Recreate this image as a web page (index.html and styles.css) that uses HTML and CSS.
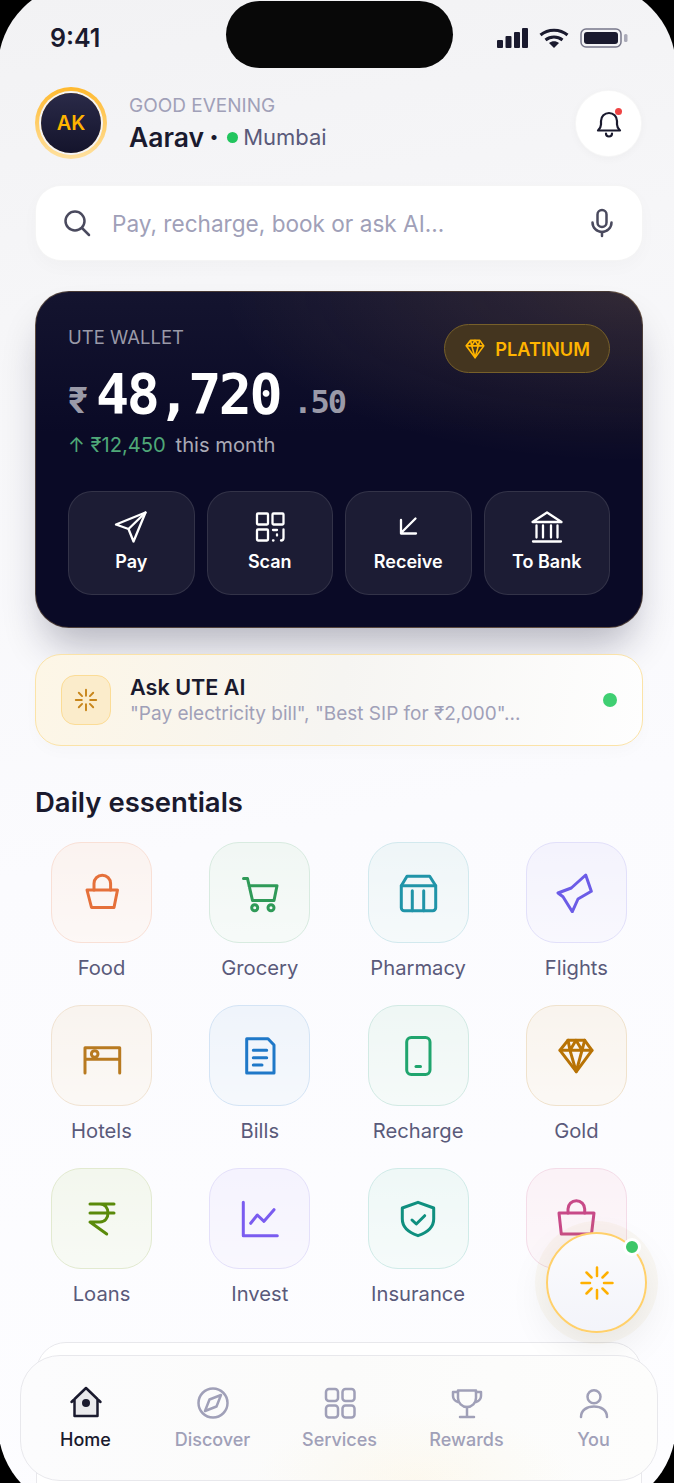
FILE: index.html
```html
<!DOCTYPE html>
<html lang="en">
<head>
    <meta charset="UTF-8">
    <meta name="viewport" content="width=device-width, initial-scale=1.0">
    <title>UTE Home</title>
    <link rel="stylesheet" href="styles.css">
</head>
<body>
    <div class="phone">
        <div class="island"></div>

        <div class="status-bar">
            <span class="time">9:41</span>
            <div class="status-icons">
                <svg width="31" height="20" viewBox="0 0 31 20"><rect x="0" y="12" width="6" height="8" rx="1"/><rect x="8.500" y="8" width="6" height="12" rx="1"/><rect x="17" y="4" width="6" height="16" rx="1"/><rect x="25" y="0" width="6" height="20" rx="1"/></svg>
                <svg width="30" height="20" viewBox="0 0 30 20" fill="none" stroke="#1a1a2e" stroke-width="3"><path d="M1.500 7c7.500-6.500 19.500-6.500 27 0"/><path d="M6.500 12c5-4 12-4 17 0"/><path d="M15 20l-5-5c3-2.500 7-2.500 10 0z" fill="#1a1a2e" stroke="none"/></svg>
                <svg width="48" height="20" viewBox="0 0 48 20"><rect x="1" y="1" width="40" height="18" rx="5" fill="none" stroke="#77778a" stroke-width="1.500"/><rect x="4" y="4" width="34" height="12" rx="3" fill="#1a1a2e"/><rect x="44" y="6" width="3.500" height="8" rx="1.500" fill="#aaaab8"/></svg>
            </div>
        </div>

        <header class="top-row">
            <div class="avatar"><span>AK</span></div>
            <div class="hello">
                <div class="greeting">GOOD EVENING</div>
                <div class="who"><strong>Aarav</strong> <b class="sep">·</b> <i class="live-dot"></i> Mumbai</div>
            </div>
            <button class="bell">
                <svg width="30" height="30" viewBox="0 0 30 30" fill="none" stroke="#1a1a2e" stroke-width="2.200" stroke-linejoin="round" stroke-linecap="round"><path d="M4 22.500h22c-2-2-3-3.500-3-6v-3.500a8 8 0 0 0-16 0v3.500c0 2.500-1 4-3 6z"/><path d="M12 25.500a3 3 0 0 0 6 0"/></svg>
                <i class="bell-dot"></i>
            </button>
        </header>

        <div class="search">
            <svg width="30" height="30" viewBox="0 0 30 30" fill="none" stroke="#4a4a5e" stroke-width="2.500" stroke-linecap="round"><circle cx="12" cy="13" r="9.500"/><path d="M19 20l7 7"/></svg>
            <span class="search-text">Pay, recharge, book or ask AI...</span>
            <svg width="26" height="30" viewBox="0 0 26 30" fill="none" stroke="#4a4a5e" stroke-width="2.500" stroke-linecap="round"><rect x="8.500" y="2" width="9" height="17" rx="4.500"/><path d="M3.500 14.500a9.500 9.500 0 0 0 19 0"/><path d="M13 24v4"/></svg>
        </div>

        <section class="wallet">
            <div class="wallet-top">
                <div>
                    <div class="wallet-label">UTE WALLET</div>
                    <div class="balance"><span class="rupee">₹</span><span class="amount">48,720</span><span class="paise">.50</span></div>
                    <div class="delta"><span class="delta-up">↑ ₹12,450</span> this month</div>
                </div>
                <div class="tier">
                    <svg width="22" height="22" viewBox="0 0 40 40" fill="none" stroke="#ffb400" stroke-width="3" stroke-linejoin="round"><path d="M4 14.300L12 4.300H28.700L36 14.300L20.300 35.700Z"/><path d="M4 14.300H36M14 14.300L20.200 35.700L26 14.300M12 4.300L14 14.300L20 4.300L26 14.300L28.700 4.300"/></svg>
                    PLATINUM
                </div>
            </div>
            <div class="actions">
                <div class="action">
                    <svg width="36" height="36" viewBox="0 0 36 36" fill="none" stroke="#fff" stroke-width="2.300" stroke-linejoin="round" stroke-linecap="round"><path d="M32.500 3.500L3 15.500L15.500 20L20.500 32.500Z"/><path d="M15.500 20L32.500 3.500"/></svg>
                    <span>Pay</span>
                </div>
                <div class="action">
                    <svg width="36" height="36" viewBox="0 0 36 36" fill="none" stroke="#fff" stroke-width="2.300" stroke-linecap="round"><rect x="5" y="4.500" width="11" height="11" rx="1"/><rect x="20.500" y="4.500" width="11" height="11" rx="1"/><rect x="5" y="20.500" width="11" height="11" rx="1"/><path d="M21 21h4M31.500 20.500V29c0 1.500-1 2.500-2.500 2.500M25 25.500v1M21 31.500h.5"/></svg>
                    <span>Scan</span>
                </div>
                <div class="action">
                    <svg width="36" height="36" viewBox="0 0 36 36" fill="none" stroke="#fff" stroke-width="2.300" stroke-linecap="round" stroke-linejoin="round"><path d="M25.500 9.500L11 24M11 11v13.500h15"/></svg>
                    <span>Receive</span>
                </div>
                <div class="action">
                    <svg width="36" height="36" viewBox="0 0 36 36" fill="none" stroke="#fff" stroke-width="2.300" stroke-linecap="round" stroke-linejoin="round"><path d="M3.500 13L18 3.500L32.500 13Z"/><path d="M7.500 16.500v12M14 16.500v12M22 16.500v12M28.500 16.500v12M4 32.500h28"/></svg>
                    <span>To Bank</span>
                </div>
            </div>
        </section>

        <section class="ask">
            <div class="ask-icon">
                <svg width="24" height="24" viewBox="0 0 40 40" fill="none" stroke="#c8851a" stroke-width="3.200" stroke-linecap="round"><path d="M20 3v10M20 27v10M3 20h10M27 20h10M8 8l5.500 5.500M26.500 26.500L32 32M32 8l-5.500 5.500M13.500 26.500L8 32"/></svg>
            </div>
            <div class="ask-text">
                <div class="ask-title">Ask UTE AI</div>
                <div class="ask-hint">"Pay electricity bill", "Best SIP for ₹2,000"...</div>
            </div>
            <i class="ask-dot"></i>
        </section>

        <h2 class="section-title">Daily essentials</h2>

        <div class="grid">
            <div class="item">
                <div class="tile tile-food"><svg viewBox="0 0 40 40"><path d="M12 17v-6.500a8.300 8.300 0 0 1 16.600 0V17"/><path d="M5 17H35.500L32 34.500H9.500Z"/></svg></div>
                <span>Food</span>
            </div>
            <div class="item">
                <div class="tile tile-grocery"><svg viewBox="0 0 40 40"><path d="M3.500 5.500H7.500L12.500 27.500H34L37 12.700H9"/><circle cx="14.700" cy="34.700" r="3"/><circle cx="31" cy="34.700" r="3"/></svg></div>
                <span>Grocery</span>
            </div>
            <div class="item">
                <div class="tile tile-pharmacy"><svg viewBox="0 0 40 40"><path d="M3.300 12.700L9 3.300H31.700L37.700 12.700V34.700a3 3 0 0 1-3 3H6.300a3 3 0 0 1-3-3Z"/><path d="M3.300 12.700H37.700M14.300 17.700V37.700M25.700 17.700V37.700"/></svg></div>
                <span>Pharmacy</span>
            </div>
            <div class="item">
                <div class="tile tile-flights"><svg viewBox="0 0 40 40"><path d="M29.700 2L35.300 18.300L22 26L16.300 38.700L7 23.700L2 20L15.300 15Z"/></svg></div>
                <span>Flights</span>
            </div>
            <div class="item">
                <div class="tile tile-hotels"><svg viewBox="0 0 40 40"><path d="M3 37V11.700H37.700V37M3 23.300H37.700"/><circle cx="12.700" cy="18" r="3.300"/></svg></div>
                <span>Hotels</span>
            </div>
            <div class="item">
                <div class="tile tile-bills"><svg viewBox="0 0 40 40"><path d="M6.700 2.700H28L34 9V37H6.700Z"/><path d="M13.300 14.300H26.700M13.300 21.700H26.700M13.300 29H22"/></svg></div>
                <span>Bills</span>
            </div>
            <div class="item">
                <div class="tile tile-recharge"><svg viewBox="0 0 40 40"><rect x="8.700" y="1.500" width="23.300" height="37" rx="4.500"/><path d="M18 30.500H22.500"/></svg></div>
                <span>Recharge</span>
            </div>
            <div class="item">
                <div class="tile tile-gold"><svg viewBox="0 0 40 40"><path d="M4 14.300L12 4.300H28.700L36 14.300L20.300 35.700Z"/><path d="M4 14.300H36M14 14.300L20.200 35.700L26 14.300M12 4.300L14 14.300L20 4.300L26 14.300L28.700 4.300"/></svg></div>
                <span>Gold</span>
            </div>
            <div class="item">
                <div class="tile tile-loans"><svg viewBox="0 0 40 40"><path d="M8 5H32M8 14H32M8 5H18c5 0 8 4 8 9s-3 9-8 9H8L24.700 35"/></svg></div>
                <span>Loans</span>
            </div>
            <div class="item">
                <div class="tile tile-invest"><svg viewBox="0 0 40 40"><path d="M3.300 3.300V36.700H37.300"/><path d="M10.700 24.300L17.300 16L24 22.300L34 10.700"/></svg></div>
                <span>Invest</span>
            </div>
            <div class="item">
                <div class="tile tile-insurance"><svg viewBox="0 0 40 40"><path d="M20 3.300L35.700 9V20c0 8-6.500 13.500-15.700 16.700C10.800 33.500 4.300 28 4.300 20V9Z"/><path d="M14 21L18.300 25L26.700 16.700"/></svg></div>
                <span>Insurance</span>
            </div>
            <div class="item">
                <div class="tile tile-shop"><svg viewBox="0 0 40 40"><path d="M12 14v-4a8.300 8.300 0 0 1 16.700 0v4"/><path d="M3 14H38L35.500 35H5.300Z"/></svg></div>
            </div>
        </div>

        <div class="next-card"></div>

        <button class="fab">
            <svg width="36" height="36" viewBox="0 0 36 36" fill="none" stroke="#ffb000" stroke-width="2.500" stroke-linecap="round"><path d="M18 2.500v8.500M18 25v8.500M2.500 18H11M25 18h8.500M7.500 7.500l5 5M23.500 23.500l5 5M28.500 7.500l-5 5M12.500 23.500l-5 5"/></svg>
            <i class="fab-dot"></i>
        </button>

        <nav class="tabs">
            <div class="tab tab-active">
                <svg viewBox="0 0 40 40"><path d="M8.500 15.500V33H31.500V15.500L20 5Z" fill="#1a1a2e" fill-opacity="0.08" stroke="none"/><path d="M5.500 19L20 5L34.500 19M8.500 16V33H31.500V16"/><circle cx="20" cy="20" r="4" fill="#1a1a2e" stroke="none"/></svg>
                <span>Home</span>
            </div>
            <div class="tab">
                <svg viewBox="0 0 40 40"><circle cx="20" cy="20" r="14.500"/><path d="M28 12L23.500 23.500L12 28L16.500 16.500Z"/></svg>
                <span>Discover</span>
            </div>
            <div class="tab">
                <svg viewBox="0 0 40 40"><rect x="6" y="6" width="12" height="12" rx="3"/><rect x="22.500" y="6" width="12" height="12" rx="3"/><rect x="6" y="22.500" width="12" height="12" rx="3"/><rect x="22.500" y="22.500" width="12" height="12" rx="3"/></svg>
                <span>Services</span>
            </div>
            <div class="tab">
                <svg viewBox="0 0 40 40"><path d="M11 7.500H29V15a9 9 0 0 1-18 0Z"/><path d="M11 9H6v4c0 3 2 5 5 6M29 9h5v4c0 3-2 5-5 6M20 24v10M13 34H27"/></svg>
                <span>Rewards</span>
            </div>
            <div class="tab">
                <svg viewBox="0 0 40 40"><circle cx="20" cy="13.700" r="6.500"/><path d="M7 34c0-7 6-10.500 13-10.500S33 27 33 34"/></svg>
                <span>You</span>
            </div>
        </nav>
    </div>
</body>
</html>
```

FILE: styles.css
```css
/* Base */
* {
    box-sizing: border-box;
}

html, body {
    margin: 0;
    height: 100%;
    background: #000;
}

body {
    font-family: 'Inter', 'Noto Sans', sans-serif;
    color: #1a1a2e;
}

button {
    font: inherit;
    padding: 0;
}

.phone {
    position: relative;
    width: 674px;
    height: 1483px;
    padding: 0 31px 0 35px;
    overflow: hidden;
    /* the device outline runs a little past the window on every side */
    clip-path: inset(-17px -2px -27px -2px round 85px);
    background: linear-gradient(170deg, #f2f2f4 0%, #f6f6f8 20%, #fbfbfe 55%, #fdfdff 100%);
}

.island {
    position: absolute;
    top: 1px;
    left: 226px;
    width: 227px;
    height: 67px;
    border-radius: 34px;
    background: #080808;
}

/* Status bar */
.status-bar {
    display: flex;
    align-items: center;
    justify-content: space-between;
    height: 76px;
    padding-left: 15px;
}

.time {
    font-size: 25px;
    font-weight: 600;
}

.status-icons {
    display: flex;
    align-items: center;
    gap: 11px;
    margin-right: 15px;
    fill: #1a1a2e;
}

/* Header */
.top-row {
    display: flex;
    align-items: center;
    height: 72px;
    margin-top: 11px;
    padding-right: 1px;
}

.avatar {
    display: flex;
    align-items: center;
    justify-content: center;
    flex: none;
    width: 72px;
    height: 72px;
    border-radius: 50%;
    background: linear-gradient(#ffb92e, #ffe1a0);
}

.avatar span {
    display: flex;
    align-items: center;
    justify-content: center;
    width: 60px;
    height: 60px;
    border-radius: 50%;
    background: linear-gradient(#2a2a48, #14142c);
    box-shadow: 0 0 0 2px #f4f4f6;
    color: #ffb400;
    font-size: 20px;
    font-weight: 600;
}

.hello {
    flex: 1;
    align-self: flex-start;
    margin-left: 22px;
    padding-top: 7px;
}

.greeting {
    color: #a0a0b8;
    font-size: 19px;
    line-height: 24px;
}

.who {
    display: flex;
    align-items: center;
    gap: 7px;
    margin-top: 2px;
    color: #5a5a7a;
    font-size: 22px;
    line-height: 34px;
}

.who strong {
    color: #1a1a2e;
    font-size: 26.5px;
    font-weight: 600;
}

.sep {
    margin: 0 2px 0 -2px;
    color: #1a1a2e;
    font-size: 30px;
    font-weight: 700;
}

.live-dot {
    width: 11px;
    height: 11px;
    margin: 0 -2px 0 -1px;
    border-radius: 50%;
    background: #22c55e;
}

.bell {
    position: relative;
    display: flex;
    align-items: center;
    justify-content: center;
    flex: none;
    width: 67px;
    height: 67px;
    border: 1px solid rgba(0,0,0,0.03);
    border-radius: 50%;
    background: #fff;
    box-shadow: 0 2px 8px rgba(0,0,0,0.03);
}

.bell-dot {
    position: absolute;
    top: 17px;
    right: 19px;
    width: 7px;
    height: 7px;
    border-radius: 50%;
    background: #ef4444;
}

/* Search */
.search {
    display: flex;
    align-items: center;
    gap: 19px;
    width: 608px;
    height: 76px;
    margin-top: 26px;
    padding: 0 27px;
    border: 1px solid rgba(0,0,0,0.04);
    border-radius: 26px;
    background: #fff;
    box-shadow: 0 6px 18px rgba(0,0,0,0.025);
}

.search-text {
    flex: 1;
    color: #a0a0b8;
    font-size: 22.6px;
}

/* Wallet card */
.wallet {
    width: 608px;
    height: 337px;
    margin-top: 30px;
    padding: 32px;
    border: 1px solid rgba(255,200,100,0.25);
    border-radius: 34px;
    background:
        radial-gradient(ellipse 420px 170px at 100% 0, rgba(255,185,100,0.13), transparent),
        linear-gradient(#14142f, #0a0a26 42%);
    box-shadow: 0 26px 40px -10px rgba(20,20,50,0.3);
}

.wallet-top {
    display: flex;
    justify-content: space-between;
    align-items: flex-start;
    height: 167px;
}

.wallet-label {
    color: #9a9aa8;
    font-size: 18.5px;
    line-height: 26px;
}

.balance {
    display: flex;
    align-items: baseline;
    margin-top: 10px;
    color: #fff;
    font-family: 'DejaVu Sans Mono', monospace;
    font-weight: 700;
    line-height: 68px;
}

.rupee {
    margin-right: 8px;
    color: #9a9aa8;
    font-family: 'Inter', sans-serif;
    font-size: 35px;
}

.amount {
    font-size: 55px;
    letter-spacing: -2.4px;
}

.paise {
    margin-left: 13px;
    color: #9a9aa8;
    font-size: 32px;
    letter-spacing: -2px;
}

.delta {
    margin-top: -5px;
    color: #aaaab6;
    font-size: 20.2px;
    line-height: 28px;
}

.delta-up {
    margin-right: 4px;
    color: #4fa878;
}

.tier {
    display: flex;
    align-items: center;
    gap: 9px;
    height: 49px;
    padding: 0 19px;
    border: 1px solid #77602a;
    border-radius: 25px;
    background: #44351f;
    color: #ffb400;
    font-size: 18.2px;
    font-weight: 600;
}

.actions {
    display: grid;
    grid-template-columns: repeat(4, 1fr);
    gap: 12px;
}

.action {
    display: flex;
    flex-direction: column;
    align-items: center;
    height: 104px;
    padding-top: 17px;
    border: 1px solid rgba(255,255,255,0.1);
    border-radius: 24px;
    background: #1c1c34;
    color: #fff;
    font-size: 18px;
    font-weight: 600;
}

.action span {
    margin-top: 6px;
}

/* Ask AI */
.ask {
    display: flex;
    align-items: center;
    width: 608px;
    height: 92px;
    margin-top: 26px;
    padding: 0 25px;
    border: 1px solid #fbe3a8;
    border-radius: 26px;
    background: linear-gradient(100deg, #fdf6e6 0%, #f6f5f2 50%, #fefefe 100%);
    box-shadow: 0 6px 16px rgba(0,0,0,0.02);
}

.ask-icon {
    display: flex;
    align-items: center;
    justify-content: center;
    flex: none;
    width: 50px;
    height: 50px;
    border: 1px solid #fbdc96;
    border-radius: 14px;
    background: #fbeccb;
}

.ask-text {
    flex: 1;
    margin-left: 19px;
}

.ask-title {
    font-size: 21.6px;
    font-weight: 600;
    line-height: 28px;
}

.ask-hint {
    color: #a0a0b8;
    font-size: 19px;
    line-height: 26px;
}

.ask-dot {
    width: 14px;
    height: 14px;
    border-radius: 50%;
    background: #3fcf72;
}

/* Essentials grid */
.section-title {
    margin: 39px 0 0;
    font-size: 27.5px;
    font-weight: 600;
    line-height: 34px;
}

.grid {
    display: grid;
    grid-template-columns: repeat(4, 131px);
    column-gap: 27.3px;
    row-gap: 25px;
    width: 606px;
    margin: 23px 0 0 1px;
}

.item {
    display: flex;
    flex-direction: column;
    align-items: center;
    min-height: 138px;
    color: #5a5a7a;
    font-size: 20.2px;
    line-height: 24px;
}

.item span {
    margin-top: 13px;
}

.tile {
    display: flex;
    align-items: center;
    justify-content: center;
    width: 101px;
    height: 101px;
    border: 1px solid;
    border-radius: 30px;
    background-image: linear-gradient(rgba(255,255,255,0), rgba(255,255,255,0.4));
}

.tile svg {
    width: 40px;
    height: 40px;
    fill: none;
    stroke: currentColor;
    stroke-width: 3;
    stroke-linecap: round;
    stroke-linejoin: round;
}

.tile-food { color: #e5703a; border-color: #f9e0d6; background-color: #fbf3f0; }
.tile-grocery { color: #2f9a58; border-color: #d8ebe0; background-color: #f1f7f4; }
.tile-pharmacy { color: #2094a8; border-color: #d2e9ee; background-color: #eff6f8; }
.tile-flights { color: #6c5ce7; border-color: #e2e0fa; background-color: #f4f3fd; }
.tile-hotels { color: #b87a20; border-color: #f1e3d2; background-color: #f9f4ef; }
.tile-bills { color: #1f78c8; border-color: #d4e4f5; background-color: #eff4fb; }
.tile-recharge { color: #20a56e; border-color: #d2eae4; background-color: #eff7f5; }
.tile-gold { color: #b87305; border-color: #f0e2cc; background-color: #f9f4ee; }
.tile-loans { color: #5a8a0a; border-color: #e2ead0; background-color: #f3f7ee; }
.tile-invest { color: #7a5cf0; border-color: #e4e0fa; background-color: #f5f3fe; }
.tile-insurance { color: #0f8f7f; border-color: #d0ebe8; background-color: #eff8f7; }
.tile-shop { color: #c84a88; border-color: #f4dce8; background-color: #fbf2f7; }

/* Peek of the next card, mostly under the tab bar */
.next-card {
    width: 606px;
    height: 300px;
    margin: 36px 0 0 1px;
    border: 1px solid #e8e8ec;
    border-radius: 30px;
    background: #fff;
}

/* Floating AI button */
.fab {
    position: absolute;
    top: 1232px;
    left: 546px;
    display: flex;
    align-items: center;
    justify-content: center;
    width: 101px;
    height: 101px;
    border: 2.5px solid #ffd06b;
    border-radius: 50%;
    background: linear-gradient(#fbfbfd, #f3f4fa);
    box-shadow: 0 0 0 11px rgba(200,170,60,0.06), 0 14px 40px rgba(0,0,0,0.08);
}

.fab-dot {
    position: absolute;
    top: 4px;
    right: 4px;
    width: 18px;
    height: 18px;
    border: 3px solid #fff;
    border-radius: 50%;
    background: #3cc668;
}

/* Tab bar */
.tabs {
    position: absolute;
    top: 1355px;
    left: 20px;
    display: grid;
    grid-template-columns: repeat(5, 127px);
    width: 638px;
    height: 126px;
    padding: 27px 1px 0;
    border: 1px solid #e8e8ec;
    border-radius: 40px;
    background:
        radial-gradient(ellipse 160px 70px at 62% 100%, rgba(255,240,205,0.25), transparent),
        linear-gradient(90deg, #fcfcfd 0%, #fbfbfa 50%, #fdfdfc 100%);
}

.tab {
    display: flex;
    flex-direction: column;
    align-items: center;
    color: #a0a0b8;
    font-size: 18px;
    font-weight: 500;
    line-height: 24px;
}

.tab svg {
    width: 40px;
    height: 40px;
    margin-bottom: 5px;
    fill: none;
    stroke: currentColor;
    stroke-width: 2.5;
    stroke-linecap: round;
    stroke-linejoin: round;
}

.tab-active {
    color: #1a1a2e;
}
```
